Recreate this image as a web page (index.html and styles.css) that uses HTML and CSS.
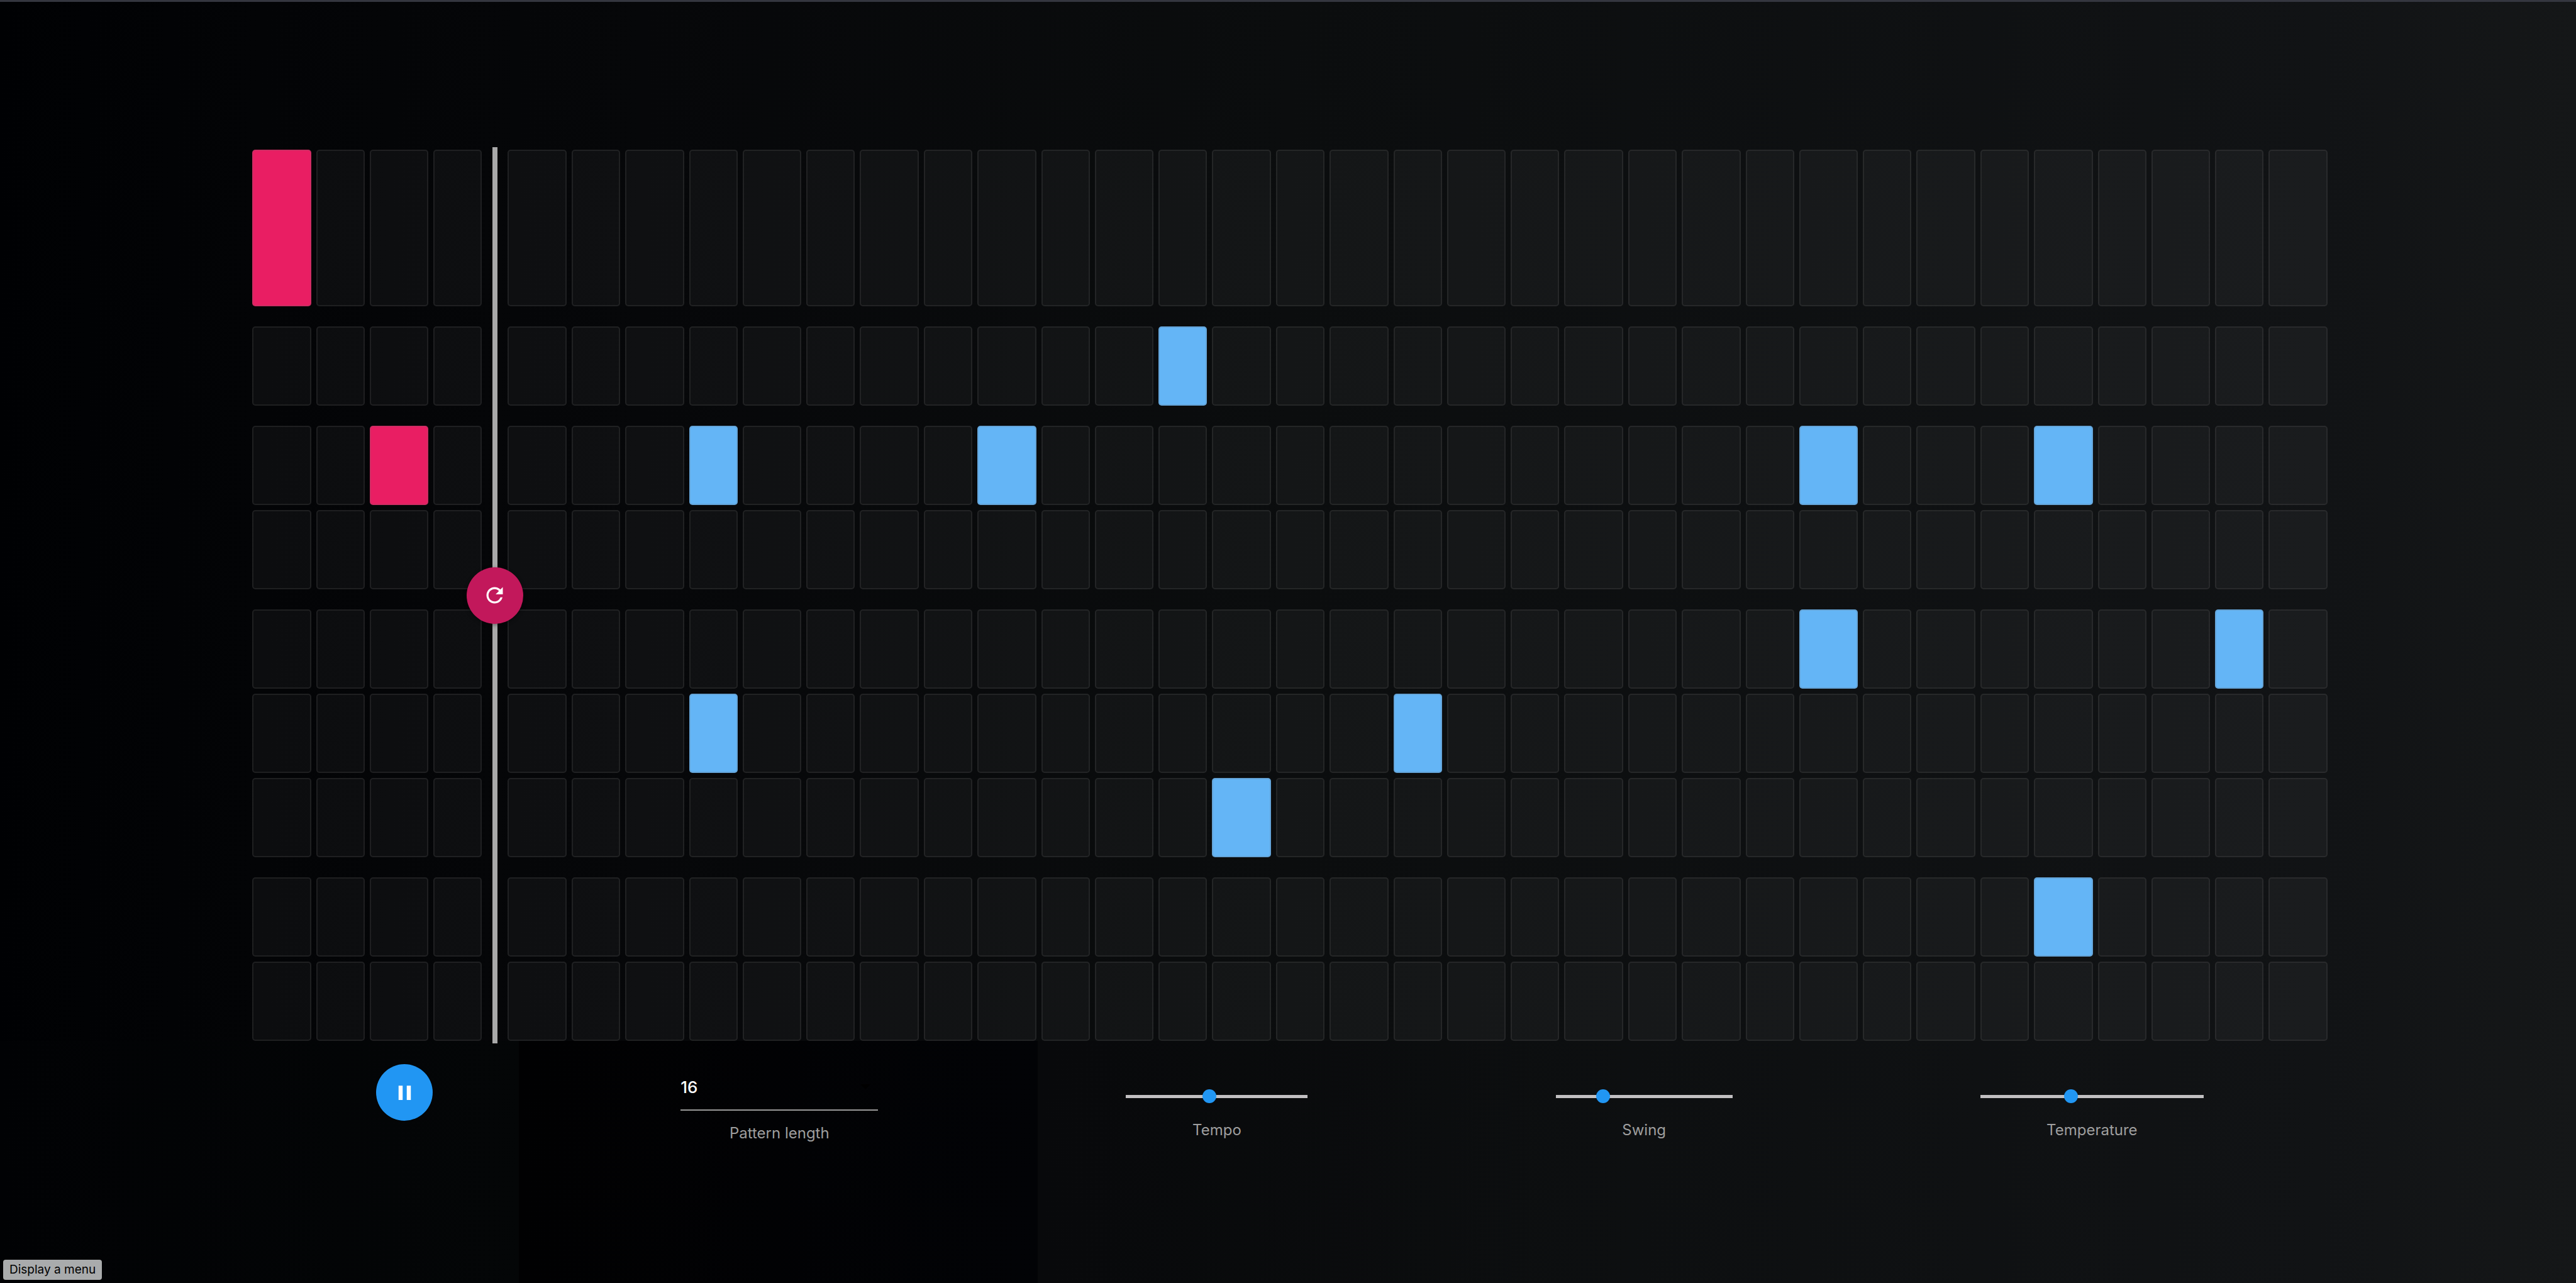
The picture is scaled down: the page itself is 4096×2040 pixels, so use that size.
FILE: index.html
```html
<!DOCTYPE html>
<html lang="en">
<head>
<meta charset="utf-8">
<title>Drum sequencer</title>
<link rel="stylesheet" href="styles.css">
</head>
<body>
<main class="app">
  <section class="sequencer" aria-label="Pattern">
    <div class="tracks" id="tracks"></div>
    <div class="playhead-layer">
      <div class="playhead">
        <button class="round regenerate" type="button" aria-label="Regenerate">
          <svg class="icon" viewBox="0 0 24 24" aria-hidden="true"><path d="M17.65 6.35C16.2 4.9 14.21 4 12 4c-4.42 0-7.99 3.58-7.99 8s3.57 8 7.99 8c3.73 0 6.84-2.55 7.73-6h-2.08c-.82 2.33-3.04 4-5.65 4-3.31 0-6-2.69-6-6s2.69-6 6-6c1.66 0 3.14.69 4.22 1.78L13 11h7V4l-2.35 2.35z"/></svg>
        </button>
      </div>
    </div>
  </section>
  <form class="controls">
    <button class="round playpause" type="button" aria-label="Pause">
      <svg class="icon" viewBox="0 0 24 24" aria-hidden="true"><path d="M6 19h4V5H6v14zm8-14v14h4V5h-4z"/></svg>
    </button>
    <div class="control control-length">
      <div class="select-wrap">
        <select class="select" id="length"><option>4</option><option>8</option><option selected>16</option><option>32</option></select>
        <span class="caret"></span>
      </div>
      <label class="label" for="length">Pattern length</label>
    </div>
    <div class="control control-tempo">
      <input class="slider" type="range" id="tempo" min="20" max="240" value="120">
      <label class="label" for="tempo">Tempo</label>
    </div>
    <div class="control control-swing">
      <input class="slider" type="range" id="swing" min="0" max="100" value="25">
      <label class="label" for="swing">Swing</label>
    </div>
    <div class="control control-temperature">
      <input class="slider" type="range" id="temperature" min="0" max="100" value="40">
      <label class="label" for="temperature">Temperature</label>
    </div>
  </form>
</main>
<div class="status">Display a menu</div>
<script src="script.js"></script>
</body>
</html>
```
FILE: styles.css
```css
* {
  box-sizing: border-box;
}

body {
  margin: 0;
  min-height: 100vh;
  border-top: 3px solid #34363f;
  background: linear-gradient(to right, #000103, #030406 10%, #060709 25%, #0b0d0e 50%, #111315 90%, #151718);
  color: #9e9e9e;
  font-family: Inter, Roboto, sans-serif;
  font-size: 24px;
}

.app {
  min-height: calc(100vh - 3px);
  display: flex;
  flex-direction: column;
  padding-top: 235px;
}

.sequencer {
  position: relative;
  z-index: 1;
  display: grid;
  margin: 0 395px 0 401px;
}

.tracks,
.playhead-layer {
  grid-area: 1 / 1;
}

.tracks {
  display: flex;
  flex-direction: column;
  gap: 32px;
}

.track-group,
.playhead-layer {
  display: grid;
  grid-template-columns: repeat(2, 94fr 77fr) 25px repeat(15, 94fr 77fr) 94fr;
  gap: 8px;
}

.track-group {
  grid-auto-rows: 126px;
}

.track-group.tall {
  grid-auto-rows: 249px;
}

.cell {
  appearance: none;
  min-width: 0;
  padding: 0;
  border: 2px solid rgba(102, 102, 102, 0.2);
  border-radius: 5px;
  background: rgba(255, 255, 255, 0.04);
}

.cell:nth-child(35n + 5) {
  grid-column: 6;
}

.cell.seed {
  background: #e91e63;
}

.cell.generated {
  background: #64b5f6;
}

.playhead-layer {
  pointer-events: none;
}

.playhead {
  grid-column: 5;
  justify-self: center;
  display: flex;
  align-items: center;
  justify-content: center;
  width: 8px;
  margin: -4px 0;
  background: #a9a9a9;
}

.round {
  flex: none;
  display: flex;
  align-items: center;
  justify-content: center;
  width: 90px;
  height: 90px;
  padding: 0;
  border: 0;
  border-radius: 50%;
}

.regenerate {
  background: #c2185b;
  box-shadow: 0 2px 6px rgba(0, 0, 0, 0.4);
  pointer-events: auto;
}

.playpause {
  background: #2196f3;
}

.icon {
  width: 39px;
  height: 39px;
  fill: #fff;
}

.controls {
  flex: 1;
  display: flex;
  justify-content: space-around;
  align-items: flex-start;
  padding: 37px 395px 0 401px;
  background: linear-gradient(to right, #010204, #040607 825px, #010102 825px, #020306 1650px, #08090b 1650px, transparent 60%);
}

.control {
  display: flex;
  flex-direction: column;
}

.control-length {
  width: 314px;
}

.control-tempo {
  width: 289px;
}

.control-swing {
  width: 281px;
}

.control-temperature {
  width: 355px;
}

.select-wrap {
  display: grid;
  align-items: center;
  border-bottom: 2px solid #9a9a9a;
}

.select {
  grid-area: 1 / 1;
  appearance: none;
  width: 100%;
  height: 72px;
  padding: 0;
  border: 0;
  background: transparent;
  color: #fff;
  font: 500 26px Inter, Roboto, sans-serif;
}

.caret {
  grid-area: 1 / 1;
  justify-self: end;
  margin-right: 12px;
  border: 8px solid transparent;
  border-top-color: #000;
  border-bottom: 0;
}

.slider {
  appearance: none;
  width: 100%;
  height: 24px;
  margin: 39px 0 6px;
  background: linear-gradient(#c2c0c2, #c2c0c2) center / 100% 5px no-repeat;
}

.slider::-webkit-slider-thumb {
  appearance: none;
  width: 22px;
  height: 22px;
  border: 0;
  border-radius: 50%;
  background: #2196f3;
}

.label {
  text-align: center;
  line-height: 28px;
  margin-top: 22px;
}

.status {
  position: fixed;
  left: 5px;
  bottom: 5px;
  height: 32px;
  padding: 0 10px;
  border-radius: 4px;
  background: #a9abac;
  color: #000;
  font-size: 19px;
  line-height: 32px;
}
```
FILE: script.js
```js
// Steps that are switched on, by drum row; step numbers start at 0.
const STEPS = 35;
const SEED_STEPS = 4;
const groups = [
  { tall: true, rows: [[0]] },
  { rows: [[15]] },
  { rows: [[2, 7, 12, 26, 30], []] },
  { rows: [[26, 33], [7, 19], [16]] },
  { rows: [[30], []] }
];

const tracks = document.getElementById('tracks');
for (const group of groups) {
  const el = document.createElement('div');
  el.className = group.tall ? 'track-group tall' : 'track-group';
  for (const active of group.rows) {
    for (let step = 0; step < STEPS; step++) {
      const cell = document.createElement('button');
      cell.type = 'button';
      cell.className = 'cell';
      cell.setAttribute('aria-label', 'Step ' + (step + 1));
      if (active.includes(step)) {
        cell.classList.add(step < SEED_STEPS ? 'seed' : 'generated');
      }
      el.append(cell);
    }
  }
  tracks.append(el);
}
```
